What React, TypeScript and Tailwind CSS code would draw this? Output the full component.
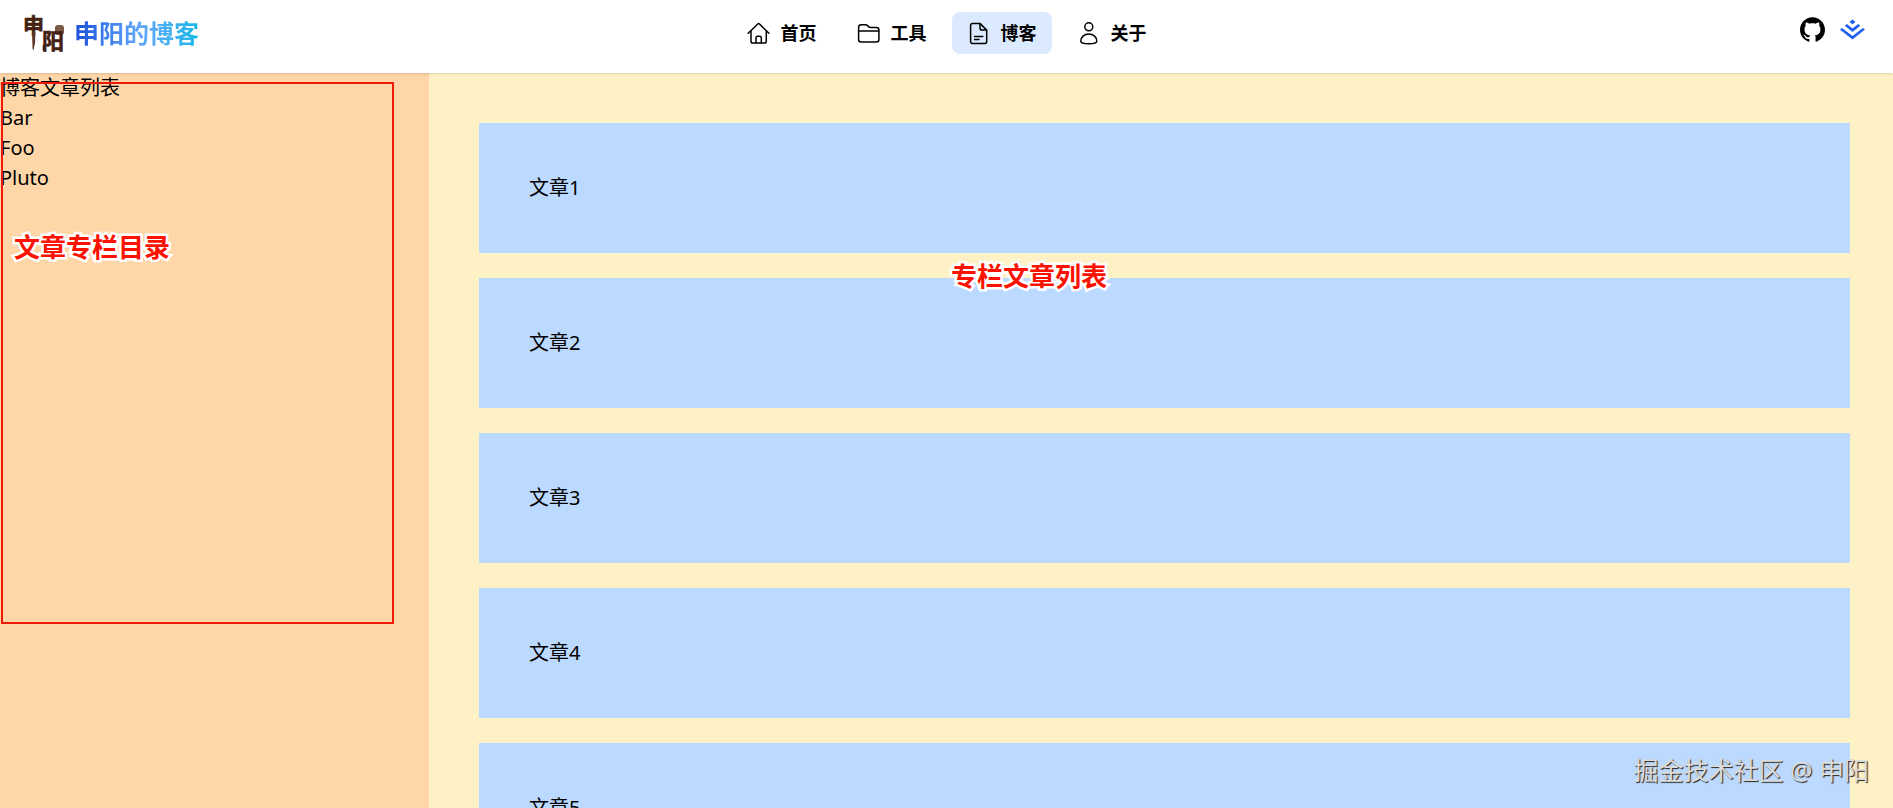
import type { ReactNode } from 'react';
import { SiGithub, SiJuejin } from 'react-icons/si';

const iconProps = {
    viewBox: '0 0 24 24',
    fill: 'none',
    stroke: 'currentColor',
    strokeWidth: 1.5,
    strokeLinecap: 'round' as const,
    strokeLinejoin: 'round' as const,
    className: 'size-6 shrink-0',
    'aria-hidden': true,
};

function HomeIcon() {
    return (
        <svg {...iconProps}>
            <path d="M1.2 12.2 10.8 3c.5-.5 1.2-.5 1.7 0l9.4 9.2" />
            <path d="M4 10v10.2c0 1.1.7 1.8 1.8 1.8h11.7c1.1 0 1.8-.7 1.8-1.8V10" />
            <path d="M9 21.8v-5c0-1 .6-1.6 1.6-1.6h2.1c1 0 1.6.6 1.6 1.6v5" />
        </svg>
    );
}

function FolderIcon() {
    return (
        <svg {...iconProps}>
            <path d="M1.6 18.6V6.4c0-1.6 1-2.6 2.6-2.6h4.3c.8 0 1.5.3 2 .8l1.4 1.3c.4.4.9.6 1.5.6h6.1c1.5 0 2.4.9 2.4 2.4v9.7c0 1.6-.9 2.5-2.5 2.5H4.1c-1.6 0-2.5-.9-2.5-2.5Z" />
            <path d="M1.8 10h19.9" />
        </svg>
    );
}

function DocIcon() {
    return (
        <svg {...iconProps}>
            <path d="M3.6 20.6V4.4c0-1.1.7-1.8 1.8-1.8h7.8l6.5 6.5v11.5c0 1.1-.7 1.8-1.8 1.8H5.4c-1.1 0-1.8-.7-1.8-1.8Z" />
            <path d="M13 2.8v4.5c0 1.1.7 1.8 1.8 1.8h4.7" />
            <path d="M7.6 15.4h8.2M7.6 18.6h4.4" />
        </svg>
    );
}

function UserIcon() {
    return (
        <svg {...iconProps}>
            <circle cx="11.8" cy="5.8" r="4" />
            <path d="M3.8 20.2c0-4 3.3-7.1 8-7.1s8 3.1 8 7.1c0 1.6-3.2 2.5-8 2.5s-8-.9-8-2.5Z" />
        </svg>
    );
}

// brush-style mark: 申 hangs above left, 阳 sits lower right with the seal over it
function Logo() {
    return (
        <svg viewBox="0 0 42 42" className="size-[42px] shrink-0 overflow-visible" aria-hidden="true">
            <rect x="31" y="13" width="9" height="10" rx="3" fill="#7b5a48" />
            <g fill="#43200f" stroke="#43200f" strokeWidth="0.6" fontFamily="'Noto Sans CJK SC', sans-serif" fontWeight="700">
                <text x="-1" y="21" fontSize="21">申</text>
                <text x="18" y="37" fontSize="22">阳</text>
            </g>
            <path d="M8 20 11.4 20 11 31 9.4 38.5 8.6 37Z" fill="#5a3322" />
            <path d="M18.8 33 21.6 33 20.8 39.5 18.6 38Z" fill="#43200f" />
        </svg>
    );
}

const navItems: { label: string; icon: ReactNode; active?: boolean }[] = [
    { label: '首页', icon: <HomeIcon /> },
    { label: '工具', icon: <FolderIcon /> },
    { label: '博客', icon: <DocIcon />, active: true },
    { label: '关于', icon: <UserIcon /> },
];

const columns = ['Bar', 'Foo', 'Pluto'];
const articles = ['文章1', '文章2', '文章3', '文章4', '文章5'];

function Note({ className, children }: { className: string; children: ReactNode }) {
    return (
        <p className={`absolute z-10 whitespace-nowrap text-[26px] leading-8 font-bold text-[#fb1200] [-webkit-text-stroke:5px_white] [paint-order:stroke_fill] [stroke-linejoin:round] ${className}`}>
            {children}
        </p>
    );
}

export default function App() {
    return (
        <div className="relative flex h-screen flex-col overflow-hidden font-['Noto_Sans','Noto_Sans_CJK_SC',sans-serif] text-xl leading-[30px] text-black">
            <header className="relative z-10 grid h-[73px] shrink-0 grid-cols-[1fr_auto_1fr] items-start bg-white px-6 shadow">
                <a href="#" className="flex items-center gap-2 pt-3">
                    <Logo />
                    <span className="bg-linear-to-r from-[#1d4ed8] via-[#60a5fa] to-[#00b8e6] bg-clip-text text-[25px] leading-10 font-bold text-transparent">
                        申阳的博客
                    </span>
                </a>

                <nav className="flex gap-[10px] pt-3">
                    {navItems.map((item) => (
                        <a
                            key={item.label}
                            href="#"
                            className={`flex h-[42px] items-center gap-[10px] rounded-lg px-[15px] text-lg font-bold ${item.active ? 'bg-blue-100' : ''}`}
                        >
                            {item.icon}
                            {item.label}
                        </a>
                    ))}
                </nav>

                <div className="flex items-center justify-end gap-[15px] pt-[17px] pr-1">
                    <a href="#" aria-label="GitHub"><SiGithub className="size-[25px]" /></a>
                    <a href="#" aria-label="掘金"><SiJuejin className="size-[25px] text-[#1e60f0]" /></a>
                </div>
            </header>

            <div className="flex min-h-0 flex-1">
                <aside className="relative w-[429px] shrink-0 bg-[#ffd6a8]">
                    <h2>博客文章列表</h2>
                    <ul>
                        {columns.map((name) => (
                            <li key={name}><a href="#">{name}</a></li>
                        ))}
                    </ul>
                    <div className="absolute top-[9px] right-[35px] left-px h-[542px] border-2 border-[#f01a08]" />
                    <Note className="top-[158px] left-[14px]">文章专栏目录</Note>
                </aside>

                <main className="relative flex flex-1 flex-col gap-[25px] bg-[#fef1c6] pt-[50px] pr-[43px] pl-[50px]">
                    {articles.map((title) => (
                        <article key={title} className="shrink-0 bg-[#bcdaff] p-[50px]">{title}</article>
                    ))}
                    <Note className="top-[187px] left-[522px]">专栏文章列表</Note>
                </main>
            </div>

            <p className="absolute right-6 bottom-[22px] z-20 text-[25px] leading-8 text-[#dcdcdc] [text-shadow:1px_1px_1px_#222]">
                掘金技术社区 @ 申阳
            </p>
        </div>
    );
}
